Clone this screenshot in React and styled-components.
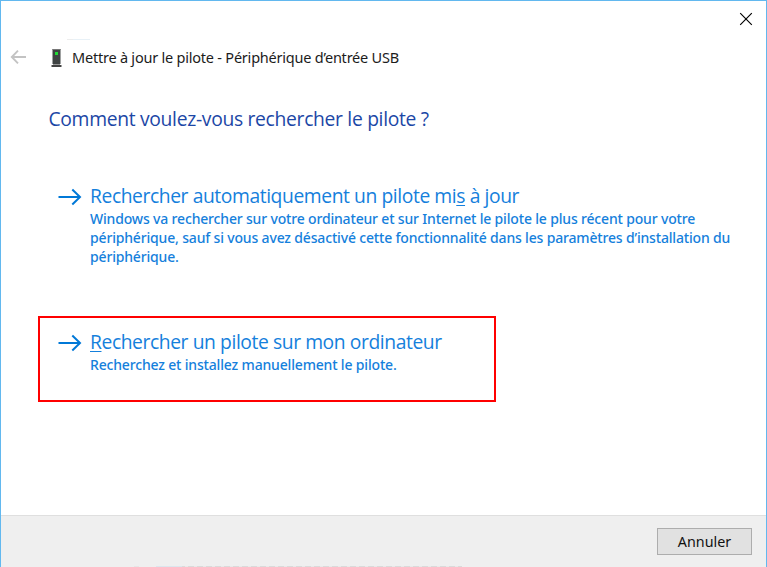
import React from 'react';
import styled, { createGlobalStyle } from 'styled-components';

const GlobalStyle = createGlobalStyle`
  * { box-sizing: border-box; }
  body {
    margin: 0;
    background: #fff;
    font-family: "Open Sans", "Noto Sans", sans-serif;
  }
`;

const Dialog = styled.main`
  width: 767px;
  height: 567px;
  display: flex;
  flex-direction: column;
  overflow: hidden;
  background: #fff;
  border: 1px solid #62b8ef;
  border-bottom: 0;
`;

const CaptionBar = styled.div`
  height: 38px;
  display: flex;
  justify-content: flex-end;
  padding: 11px 13px 0 0;
`;

const CloseButton = styled.button`
  width: 14px;
  height: 14px;
  padding: 0;
  border: 0;
  background: none;
  display: flex;
`;

const FaintEdge = styled.div`
  width: 23px;
  height: 1px;
  margin-left: 66px;
  background: linear-gradient(90deg, #ededed 0 6px, #e8f1f7 6px);
`;

const TitleRow = styled.header`
  height: 36px;
  display: flex;
  align-items: center;
  padding-left: 9px;
`;

const BackArrow = styled.svg`
  width: 17px;
  height: 16px;
  margin-top: -2px;
`;

const DeviceIcon = styled.svg`
  width: 11px;
  height: 20px;
  margin: -1px 0 0 24px;
`;

const Title = styled.span`
  margin: -2px 0 0 10px;
  font-family: "Noto Sans", sans-serif;
  font-size: 14.5px;
  letter-spacing: -0.22px;
  line-height: 20px;
  color: #1c1c1c;
  white-space: nowrap;
`;

const Body = styled.section`
  flex: 1;
  padding: 30px 0 0 37px;
`;

const Heading = styled.h1`
  margin: 0 0 45px 10.5px;
  font-size: 19.3px;
  font-weight: 400;
  letter-spacing: -0.31px;
  line-height: 26px;
  color: #1c47a6;
  white-space: nowrap;
`;

const CommandLink = styled.div`
  width: ${(p) => (p.$highlighted ? '458px' : '710px')};
  height: ${(p) => (p.$highlighted ? '86px' : '115px')};
  margin-top: ${(p) => (p.$highlighted ? '24px' : '0')};
  padding-top: ${(p) => (p.$highlighted ? '11px' : '6px')};
  padding-left: ${(p) => (p.$highlighted ? '18px' : '20px')};
  border: ${(p) => (p.$highlighted ? '2px solid #f00' : '0')};
  display: flex;
  align-items: flex-start;
  color: #1580dc;
`;

const CommandArrow = styled.svg`
  flex: none;
  width: 24px;
  height: 18px;
  margin: 5px 8px 0 0;
`;

const CommandTitle = styled.div`
  font-size: 19.3px;
  letter-spacing: -0.42px;
  line-height: 26px;
  white-space: nowrap;
`;

const AccessKey = styled.span`
  text-decoration: underline;
  text-decoration-thickness: 1px;
  text-underline-offset: 2px;
`;

const Description = styled.div`
  font-family: "Noto Sans", sans-serif;
  font-size: 14px;
  font-weight: 500;
  letter-spacing: -0.17px;
  line-height: 19px;
  white-space: nowrap;
`;

const Footer = styled.footer`
  height: 52px;
  display: flex;
  flex-direction: column;
  justify-content: space-between;
  padding-top: 12px;
  border-top: 1px solid #dfdfdf;
  background: #efefef;
`;

const CancelButton = styled.button`
  width: 95px;
  height: 27px;
  margin-right: 14px;
  align-self: flex-end;
  padding: 0;
  border: 1px solid #adadad;
  background: #e1e1e1;
  color: #111;
  font-family: "Noto Sans", sans-serif;
  font-size: 14.3px;
  line-height: 25px;
`;

const FooterEdge = styled.div`
  width: 328px;
  height: 1px;
  margin-left: 133px;
  background:
    linear-gradient(90deg, #e6e6e6 5px, #efefef 5px 22px, #dce6ed 22px 48px, transparent 48px),
    repeating-linear-gradient(90deg, #dadada 0 6px, #e9e9e9 6px 9px);
`;

function ForwardArrow() {
  return (
    <CommandArrow viewBox="0 0 24 18" fill="none" stroke="#0078d7" strokeWidth="2">
      <path d="M0.5 9H22M14.3 1.5L22 9L14.3 16.5" />
    </CommandArrow>
  );
}

export default function App() {
  return (
    <>
      <GlobalStyle />
      <Dialog>
        <CaptionBar>
          <CloseButton aria-label="Fermer">
            <svg width="14" height="14" viewBox="0 0 14 14" stroke="#000" strokeWidth="1.15">
              <path d="M1.2 1.2L12.8 12.8M12.8 1.2L1.2 12.8" />
            </svg>
          </CloseButton>
        </CaptionBar>
        <FaintEdge />
        <TitleRow>
          <BackArrow viewBox="0 0 17 16" fill="none" stroke="#c3c3c3" strokeWidth="1.9">
            <path d="M16 8H2M8 1.7L1.8 8L8 14.3" />
          </BackArrow>
          <DeviceIcon viewBox="0 0 11 20">
            <path d="M1.5 1H9.5V16H1.5Z" fill="#3f4343" />
            <path d="M1.5 1H9.5V2H1.5Z" fill="#777" />
            <path d="M0.5 17H10.5V19H0.5Z" fill="#424242" />
            <path d="M2 16H9V17H2Z" fill="#999" />
            <path d="M4 4H7V7H4Z" fill="#20dc35" />
          </DeviceIcon>
          <Title>Mettre à jour le pilote - Périphérique d’entrée USB</Title>
        </TitleRow>
        <Body>
          <Heading>Comment voulez-vous rechercher le pilote ?</Heading>
          <CommandLink>
            <ForwardArrow />
            <div>
              <CommandTitle>
                Rechercher automatiquement un pilote mi<AccessKey>s</AccessKey> à jour
              </CommandTitle>
              <Description>
                Windows va rechercher sur votre ordinateur et sur Internet le pilote le plus récent pour votre
                <br />
                périphérique, sauf si vous avez désactivé cette fonctionnalité dans les paramètres d’installation du
                <br />
                périphérique.
              </Description>
            </div>
          </CommandLink>
          <CommandLink $highlighted>
            <ForwardArrow />
            <div>
              <CommandTitle>
                <AccessKey>R</AccessKey>echercher un pilote sur mon ordinateur
              </CommandTitle>
              <Description>Recherchez et installez manuellement le pilote.</Description>
            </div>
          </CommandLink>
        </Body>
        <Footer>
          <CancelButton>Annuler</CancelButton>
          <FooterEdge />
        </Footer>
      </Dialog>
    </>
  );
}
